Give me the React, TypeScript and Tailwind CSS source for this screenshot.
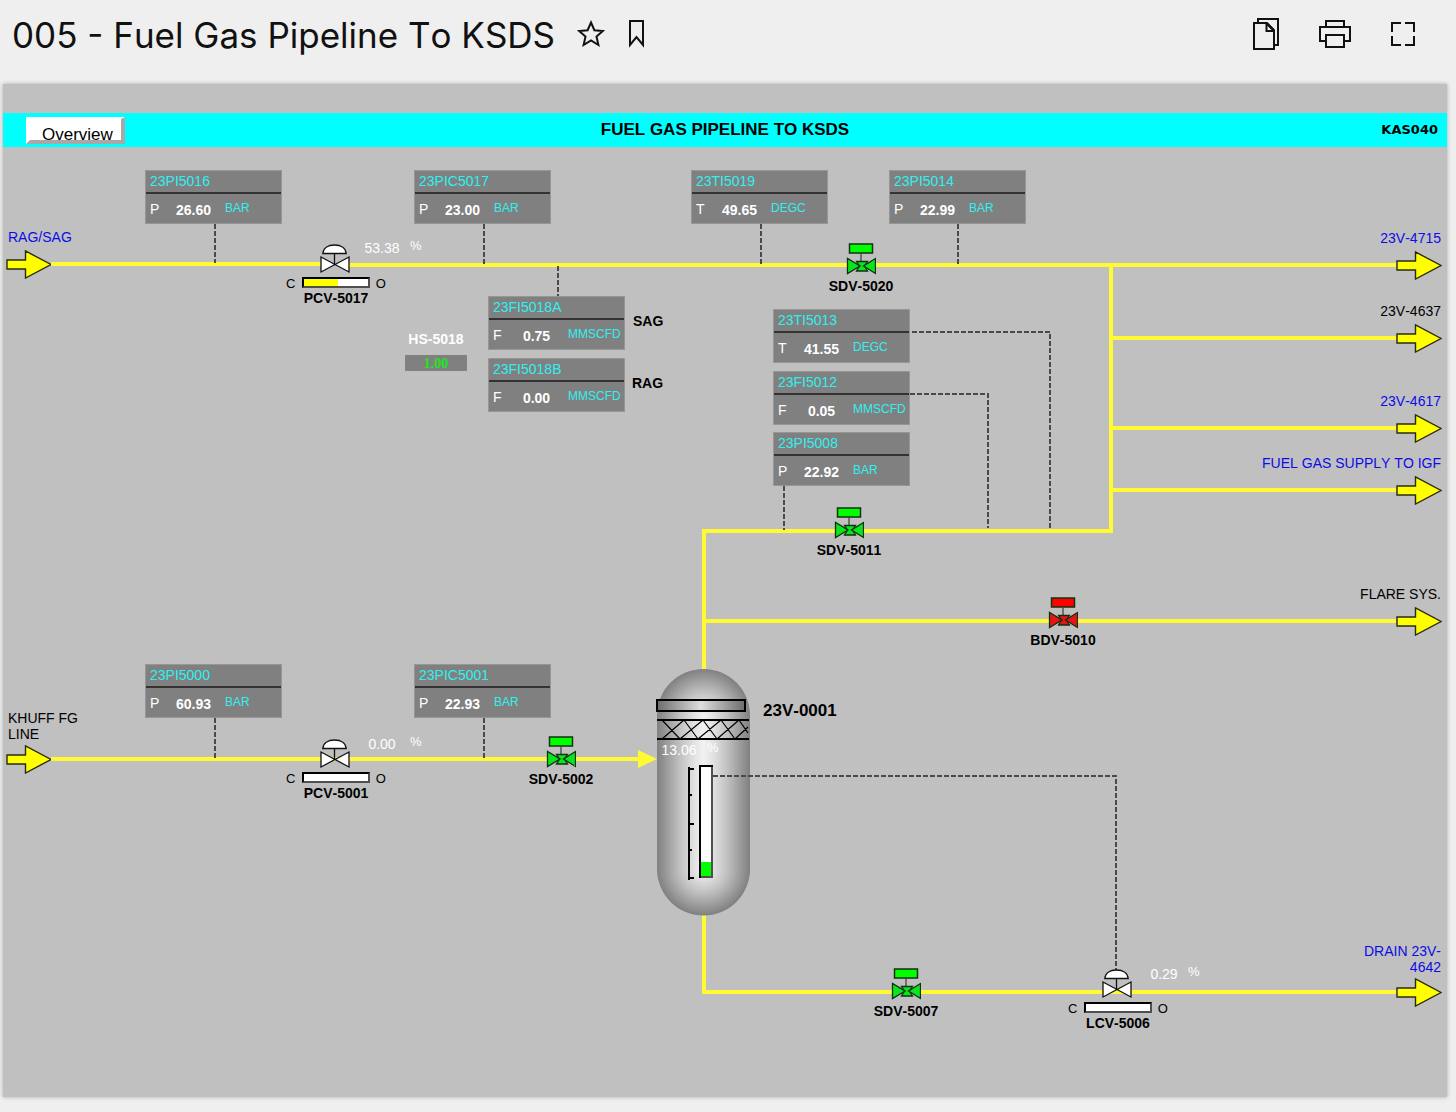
import React from "react";

const SANS = "font-['Liberation_Sans',Arial,sans-serif]";

type Point = { x: number; y: number };

/* ---------- header icons ---------- */

function StarIcon() {
  return (
    <svg width="32" height="32" viewBox="0 0 32 32" fill="none" stroke="#111" strokeWidth="2" aria-hidden="true">
      <path d="M16 3.5L19.4 11.2L27.8 12L21.500 17.600L23.4 26L16 21.500L8.600 26L10.500 17.600L4.200 12L12.600 11.200Z" />
    </svg>
  );
}

function BookmarkIcon() {
  return (
    <svg width="32" height="32" viewBox="0 0 32 32" fill="none" stroke="#111" strokeWidth="2" aria-hidden="true">
      <path d="M10 2V26L16.500 18L23 26V2Z" />
    </svg>
  );
}

function CopyIcon() {
  return (
    <svg width="36" height="36" viewBox="0 0 36 36" fill="none" stroke="#111" strokeWidth="2" aria-hidden="true">
      <path d="M9 5V1H29V27H25" />
      <path d="M5 5H17.500L25 12.500V31H5Z" />
      <path d="M17.500 5V13H25" />
      <path d="M17.500 5L25 12.500" strokeWidth="2.6" />
    </svg>
  );
}

function PrintIcon() {
  return (
    <svg width="36" height="36" viewBox="0 0 36 36" fill="none" stroke="#111" strokeWidth="2" aria-hidden="true">
      <path d="M9 9V3H27V9" />
      <path d="M9 23H3V9H33V23H27" />
      <path d="M9 17H27V29H9Z" />
    </svg>
  );
}

function FullscreenIcon() {
  return (
    <svg width="36" height="36" viewBox="0 0 36 36" fill="none" stroke="#111" strokeWidth="2" aria-hidden="true">
      <path d="M7 14V5H16M20 5H29V14M29 18V27H20M16 27H7V18" />
    </svg>
  );
}

/* ---------- instruments ---------- */

type Tag = Point & { name: string; kind: string; value: string; unit: string };

const tags: Tag[] = [
  { x: 142, y: 23, name: "23PI5016", kind: "P", value: "26.60", unit: "BAR" },
  { x: 411, y: 23, name: "23PIC5017", kind: "P", value: "23.00", unit: "BAR" },
  { x: 688, y: 23, name: "23TI5019", kind: "T", value: "49.65", unit: "DEGC" },
  { x: 886, y: 23, name: "23PI5014", kind: "P", value: "22.99", unit: "BAR" },
  { x: 485, y: 149, name: "23FI5018A", kind: "F", value: "0.75", unit: "MMSCFD" },
  { x: 485, y: 211, name: "23FI5018B", kind: "F", value: "0.00", unit: "MMSCFD" },
  { x: 770, y: 162, name: "23TI5013", kind: "T", value: "41.55", unit: "DEGC" },
  { x: 770, y: 224, name: "23FI5012", kind: "F", value: "0.05", unit: "MMSCFD" },
  { x: 770, y: 285, name: "23PI5008", kind: "P", value: "22.92", unit: "BAR" },
  { x: 142, y: 517, name: "23PI5000", kind: "P", value: "60.93", unit: "BAR" },
  { x: 411, y: 517, name: "23PIC5001", kind: "P", value: "22.93", unit: "BAR" },
];

function TagBox({ x, y, name, kind, value, unit }: Tag) {
  return (
    <div
      className="absolute h-[54px] w-[137px] border border-[#969696] bg-[#808080] leading-4 text-white"
      style={{ left: x, top: y }}
    >
      <div className="h-[23px] border-b-2 border-[#333] pt-0.5 pl-1 text-sm leading-4 text-[#2ff0f0]">{name}</div>
      <div className="flex items-start pt-1.5 pl-1">
        <span className="w-4 pt-px text-sm leading-4">{kind}</span>
        <span className="w-[55px] pt-0.5 text-center text-sm leading-4 font-bold">{value}</span>
        <span className="ml-1 text-xs leading-4 text-[#2ff0f0]">{unit}</span>
      </div>
    </div>
  );
}

/* ---------- lines entering and leaving the sheet ---------- */

function FlowArrow() {
  return (
    <svg width="46" height="30" viewBox="0 0 46 30" className="shrink-0" aria-hidden="true">
      <path
        d="M1 11H19.5V2L45 15.5L19.5 29V20H1Z"
        fill="#ffff00"
        stroke="#2a2a10"
        strokeWidth="1.4"
      />
    </svg>
  );
}

type Terminal = { x: number; y: number; label: string; link?: boolean };

const outlets: Terminal[] = [
  { x: 346, y: 83, label: "23V-4715", link: true },
  { x: 1108, y: 156, label: "23V-4637" },
  { x: 1108, y: 246, label: "23V-4617", link: true },
  { x: 1108, y: 308, label: "FUEL GAS SUPPLY TO IGF", link: true },
  { x: 701, y: 439, label: "FLARE SYS." },
  { x: 701, y: 796, label: "DRAIN 23V-\n4642", link: true },
];

function TerminalLabel({ label, link }: { label: string; link?: boolean }) {
  const cls =
    "pl-0.5 pr-px text-sm leading-4 whitespace-pre-line " + (label.includes("\n") ? "mb-0.5" : "mb-1");
  return link ? (
    <a href="#" className={cls + " text-[#0c0ce6]"}>
      {label}
    </a>
  ) : (
    <span className={cls + " text-black"}>{label}</span>
  );
}

function Outlet({ x, y, label, link }: Terminal) {
  return (
    <div className="absolute right-[5px] flex flex-col items-end text-right" style={{ left: x, top: y }}>
      <TerminalLabel label={label} link={link} />
      <div className="flex w-full items-center">
        <div className="h-1 flex-1 bg-[#fffa32]" />
        <FlowArrow />
      </div>
    </div>
  );
}

function Inlet({ y, label, link, run }: { y: number; label: string; link?: boolean; run: number }) {
  return (
    <div className="absolute left-[3px] flex flex-col items-start" style={{ top: y }}>
      <TerminalLabel label={label} link={link} />
      <div className="flex items-center">
        <FlowArrow />
        <div className="-ml-px h-1 bg-[#fffa32]" style={{ width: run }} />
      </div>
    </div>
  );
}

/* ---------- valves ---------- */

type Block = Point & { name: string; closed?: boolean };

const blockValves: Block[] = [
  { x: 825, y: 96, name: "SDV-5020" },
  { x: 813, y: 360, name: "SDV-5011" },
  { x: 1027, y: 450, name: "BDV-5010", closed: true },
  { x: 525, y: 589, name: "SDV-5002" },
  { x: 870, y: 821, name: "SDV-5007" },
];

function BlockValve({ x, y, name, closed }: Block) {
  const fill = closed ? "#ff0000" : "#00ff00";
  const body = closed ? "#e81414" : "#0ae61e";
  return (
    <div className="absolute flex w-[66px] flex-col items-center" style={{ left: x, top: y }}>
      <svg width="30" height="35" viewBox="0 0 30 35" stroke="#10300f" strokeWidth="1.3" aria-hidden="true">
        <rect x="3.5" y="1" width="23" height="9" fill={fill} strokeWidth="1.5" />
        <path d="M15 10V19" stroke="#444" />
        <path d="M10.5 18.500H21.500L18.500 23L21.500 28H10.500L13.500 23Z" fill={body} />
        <path d="M1.500 15.500V30.500L14 23Z" fill={body} />
        <path d="M29.500 15.500V30.500L17.500 23Z" fill={body} />
      </svg>
      <span className="text-sm leading-4 font-bold whitespace-nowrap text-black">{name}</span>
    </div>
  );
}

type Control = Point & { name: string; percent: number };

const controlValves: Control[] = [
  { x: 283, y: 97, name: "PCV-5017", percent: 53 },
  { x: 283, y: 592, name: "PCV-5001", percent: 0 },
  { x: 1065, y: 822, name: "LCV-5006", percent: 0 },
];

function ControlValve({ x, y, name, percent }: Control) {
  return (
    <div className="absolute flex w-[100px] flex-col items-center text-black" style={{ left: x, top: y }}>
      <svg width="32" height="32" viewBox="0 0 32 32" fill="#fff" stroke="#111" strokeWidth="1.3" aria-hidden="true">
        <path d="M2.800 9.500C3.200 4 8 1 14.500 1S25.800 4 26.200 9.500Z" />
        <path d="M1 13V28L29 13V28Z" />
        <path d="M14.500 9.500V20.500" />
      </svg>
      <div className="flex w-full items-start justify-between text-[13px] leading-4">
        <span>C</span>
        <div className="mt-px h-[11px] w-[68px] border-2 border-t-black border-r-[#4f4f4f] border-b-[#4f4f4f] border-l-black bg-white">
          <div className="h-full bg-[#ffff00]" style={{ width: `${percent}%` }} />
        </div>
        <span>O</span>
      </div>
      <span className="-mt-0.5 text-sm leading-4 font-bold">{name}</span>
    </div>
  );
}

/* ---------- white percentage readings ---------- */

const readings: (Point & { value: string; wide?: boolean })[] = [
  { x: 359, y: 91, value: "53.38", wide: true },
  { x: 359, y: 587, value: "0.00", wide: true },
  { x: 656, y: 593, value: "13.06", wide: true },
  { x: 1141, y: 817, value: "0.29" },
];

/* ---------- vessel ---------- */

function Vessel() {
  return (
    <svg
      className="absolute top-[521px] left-[652px]"
      width="96"
      height="249"
      viewBox="0 0 96 249"
      aria-label="Vessel 23V-0001"
    >
      <defs>
        <linearGradient id="shell" x1="0" x2="1" y1="0" y2="0">
          <stop offset="0" stopColor="#808080" />
          <stop offset="0.25" stopColor="#c2c2c2" />
          <stop offset="0.4" stopColor="#e2e2e2" />
          <stop offset="0.5" stopColor="#f2f2f2" />
          <stop offset="0.6" stopColor="#e2e2e2" />
          <stop offset="0.75" stopColor="#c2c2c2" />
          <stop offset="1" stopColor="#808080" />
        </linearGradient>
        <radialGradient id="cap" cx="0.5" cy="0.5" r="0.5">
          <stop offset="0" stopColor="#f2f2f2" />
          <stop offset="0.2" stopColor="#e2e2e2" />
          <stop offset="0.5" stopColor="#c2c2c2" />
          <stop offset="1" stopColor="#808080" />
        </radialGradient>
        <linearGradient id="band" x1="0" x2="1" y1="0" y2="0">
          <stop offset="0" stopColor="#6c6c6c" />
          <stop offset="0.5" stopColor="#dedede" />
          <stop offset="1" stopColor="#6c6c6c" />
        </linearGradient>
      </defs>
      <circle cx="48.500" cy="47.500" r="46.500" fill="url(#cap)" />
      <circle cx="48.500" cy="201" r="46.500" fill="url(#cap)" />
      <rect x="2" y="47" width="93" height="154" fill="url(#shell)" />
      <rect x="2" y="32" width="88" height="11" fill="url(#band)" stroke="#000" strokeWidth="2" />
      <path d="M2 52H94M2 71H94" stroke="#000" strokeWidth="2" />
      <path
        d="M7 52L25 71M29 52L7 71M29 52L43 71M48 52L25 71M48 52L62 71M66 52L43 71M66 52L80 71M84 52L62 71M84 52L93 65M80 71L93 59"
        stroke="#000"
        strokeWidth="1.200"
        fill="none"
      />
      <path d="M34 99V212" stroke="#000" strokeWidth="2" />
      <path d="M34 101H39M34 127H37M34 156H39M34 182H37M34 210H39" stroke="#000" strokeWidth="2" />
      <rect x="44" y="97" width="14" height="113" fill="#fff" />
      <rect x="46" y="194" width="10" height="14" fill="#00ff00" />
      <path d="M57 98V209H45" stroke="#4f4f4f" strokeWidth="2" fill="none" />
      <path d="M45 210V98H58" stroke="#000" strokeWidth="2" fill="none" />
    </svg>
  );
}

/* ---------- schematic ---------- */

function Lines() {
  return (
    <svg className="absolute inset-0 h-full w-full" aria-hidden="true">
      <g stroke="#fffa32" strokeWidth="4" fill="none">
        <path d="M1108 116V384H701V522" />
        <path d="M701 768V847" />
      </g>
      <path d="M635 603L654 612L635 621Z" fill="#fffa32" />
      <g stroke="#4a4a4a" strokeWidth="2" strokeDasharray="5 2" fill="none">
        <path d="M212 77V116" />
        <path d="M481 77V117" />
        <path d="M758 77V117" />
        <path d="M955 77V117" />
        <path d="M555 119V149" />
        <path d="M902 185H1047V381" />
        <path d="M907 247H985V381" />
        <path d="M781 339V383" />
        <path d="M212 571V611" />
        <path d="M481 571V611" />
      </g>
    </svg>
  );
}

function Schematic() {
  return (
    <div className="relative min-h-[950px] min-w-[1300px]">
      <Inlet y={82} label="RAG/SAG" link run={270} />
      <Inlet y={563} label={"KHUFF FG\nLINE"} run={588} />
      {outlets.map((o) => (
        <Outlet key={o.label} {...o} />
      ))}
      <Lines />
      <Vessel />
      <svg className="absolute top-[628px] left-[709px]" width="406" height="196" aria-hidden="true">
        <path d="M1 1H404V195" stroke="#4a4a4a" strokeWidth="2" strokeDasharray="5 2" fill="none" />
      </svg>
      {tags.map((t) => (
        <TagBox key={t.name} {...t} />
      ))}
      {blockValves.map((v) => (
        <BlockValve key={v.name} {...v} />
      ))}
      {controlValves.map((v) => (
        <ControlValve key={v.name} {...v} />
      ))}
      {readings.map((r) => (
        <div
          key={r.value}
          className={"absolute flex items-start text-white " + (r.wide ? "gap-2" : "gap-1")}
          style={{ left: r.x, top: r.y }}
        >
          <span className="w-10 pt-0.5 text-center text-sm leading-4">{r.value}</span>
          <span className="text-[13px] leading-4">%</span>
        </div>
      ))}
      <div className="absolute top-[184px] left-[402px] flex w-[62px] flex-col items-center gap-2">
        <span className="text-sm leading-4 font-bold whitespace-nowrap text-white">HS-5018</span>
        <span className="h-4 w-full bg-[#808080] text-center font-['Liberation_Serif',serif] text-sm leading-[18px] font-bold text-[#1ee61e]">
          1.00
        </span>
      </div>
      <span className="absolute top-[166px] left-[630px] text-sm leading-4 font-bold text-black">SAG</span>
      <span className="absolute top-[228px] left-[629px] text-sm leading-4 font-bold text-black">RAG</span>
      <span className="absolute top-[554px] left-[760px] text-[17px] leading-5 font-bold text-black">23V-0001</span>
    </div>
  );
}

export default function App() {
  return (
    <div className={"flex min-h-screen flex-col bg-[#efefef] pb-[15px] [font-kerning:none] " + SANS}>
      <header className="flex h-[72px] items-center justify-between pr-[35px] pl-3">
        <div className="flex items-center pb-0.5">
          <h1 className="font-['Inter',sans-serif] text-[35px] leading-10 whitespace-nowrap text-[#111]">
            005 - Fuel Gas Pipeline To KSDS
          </h1>
          <div className="ml-5 flex gap-[13px]">
            <button type="button" aria-label="Add to favourites" className="h-8 w-8">
              <StarIcon />
            </button>
            <button type="button" aria-label="Bookmark" className="h-8 w-8">
              <BookmarkIcon />
            </button>
          </div>
        </div>
        <div className="flex gap-8">
          <button type="button" aria-label="Copy" className="h-9 w-9">
            <CopyIcon />
          </button>
          <button type="button" aria-label="Print" className="h-9 w-9">
            <PrintIcon />
          </button>
          <button type="button" aria-label="Full screen" className="h-9 w-9">
            <FullscreenIcon />
          </button>
        </div>
      </header>

      <main className="mt-3 mr-[9px] ml-[3px] flex-1 overflow-x-auto bg-[#c0c0c0] pt-[29px] shadow-[0_0_4px_rgba(0,0,0,0.3)]">
        <div className="grid h-[34px] min-w-[1300px] grid-cols-[1fr_auto_1fr] items-center bg-[#00ffff] px-[9px] text-black">
          <button
            type="button"
            className="ml-3.5 h-[27px] w-[99px] border-t-2 border-r-4 border-b-4 border-l-4 border-t-white border-r-[#a8a8a8] border-b-[#a8a8a8] border-l-white bg-white pt-1.5 pl-3 text-left text-[17px] leading-5"
          >
            Overview
          </button>
          <h2 className="text-[17px] leading-5 font-bold">FUEL GAS PIPELINE TO KSDS</h2>
          <span className="justify-self-end font-['DejaVu_Sans',Verdana,sans-serif] text-[13px] leading-5 font-bold">
            KAS040
          </span>
        </div>
        <Schematic />
      </main>
    </div>
  );
}
